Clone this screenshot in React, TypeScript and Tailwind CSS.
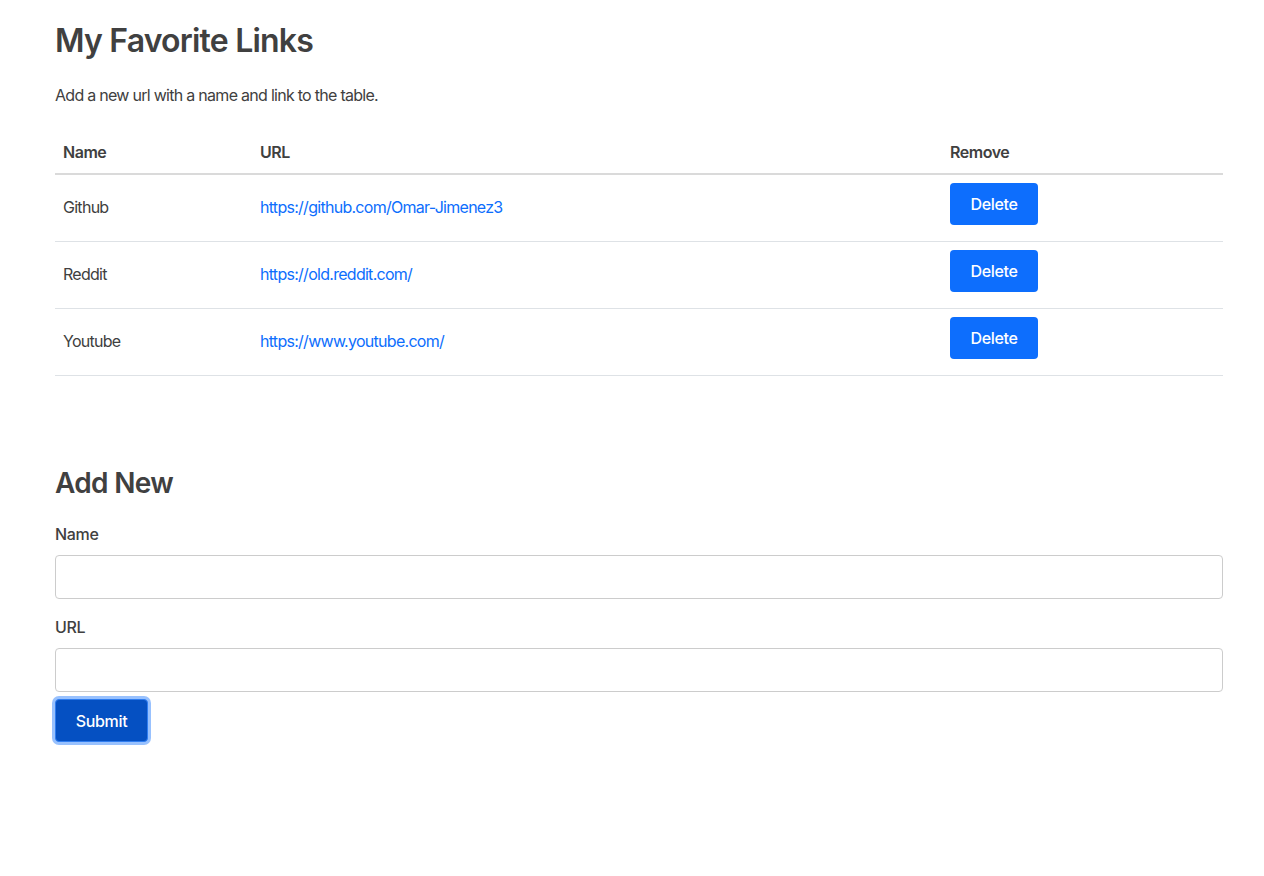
import { useState } from "react";

type Link = {
    name: string;
    url: string;
}

const initialLinks: Link[] = [
    { name: "Github", url: "https://github.com/Omar-Jimenez3" },
    { name: "Reddit", url: "https://old.reddit.com/" },
    { name: "Youtube", url: "https://www.youtube.com/" },
];

const App = () => {
    const [links, setLinks] = useState<Link[]>(initialLinks);
    const [name, setName] = useState("");
    const [url, setUrl] = useState("");

    const submit = (e: React.FormEvent) => {
        e.preventDefault();
        if (!name || !url) return;
        setLinks([...links, { name, url }]);
        setName("");
        setUrl("");
    };

    return (
        <div className="min-h-[876px] bg-white text-[#404040] font-['Inter','Liberation_Sans',sans-serif] tracking-[-0.045em]">
            <div className="w-[1168px] ml-[55px] pt-[22px]">
                <h2 className="text-[32px] leading-[1.2] font-semibold tracking-[-0.025em]">My Favorite Links</h2>
                <p className="mt-[23px] text-base leading-6">Add a new url with a name and link to the table.</p>

                <table className="mt-[26px] w-full text-left text-base leading-6 border-collapse">
                    <thead>
                        <tr className="border-b-2 border-[#dadada]">
                            <th className="w-[197px] px-2 pt-[7px] pb-[9px] font-semibold tracking-[-0.03em]">Name</th>
                            <th className="w-[690px] px-2 pt-[7px] pb-[9px] font-semibold tracking-[-0.03em]">URL</th>
                            <th className="px-2 pt-[7px] pb-[9px] font-semibold tracking-[-0.03em]">Remove</th>
                        </tr>
                    </thead>
                    <tbody>
                        {links.map((link, idx) => (
                            <tr key={idx} className="h-[67px] border-b border-[#dee2e6]">
                                <td className="px-2 pb-[2px] align-middle">{link.name}</td>
                                <td className="px-2 pb-[2px] align-middle">
                                    <a href={link.url} className="text-[#0d6efd]">{link.url}</a>
                                </td>
                                <td className="px-2 pt-[8px] pb-[15px] align-top">
                                    <button
                                        className="w-[88px] h-[42px] rounded-[4px] bg-[#0d6efd] text-white font-medium leading-6 tracking-[-0.02em]"
                                        onClick={() => setLinks(links.filter((_, i) => i !== idx))}
                                    >
                                        Delete
                                    </button>
                                </td>
                            </tr>
                        ))}
                    </tbody>
                </table>

                <h3 className="mt-[91px] text-[28px] leading-[1.2] font-semibold tracking-[-0.025em]">Add New</h3>
                <form onSubmit={submit} className="mt-[22px]">
                    <label className="block text-base leading-6 font-medium tracking-[-0.02em]">Name</label>
                    <input
                        value={name}
                        onChange={(e) => setName(e.target.value)}
                        className="mt-[9px] block w-full h-[44px] px-3 rounded-[4px] border border-[#cccccc] outline-none"
                    />
                    <label className="mt-4 block text-base leading-6 font-medium tracking-[-0.02em]">URL</label>
                    <input
                        value={url}
                        onChange={(e) => setUrl(e.target.value)}
                        className="mt-[9px] block w-full h-[44px] px-3 rounded-[4px] border border-[#cccccc] outline-none"
                    />
                    <button
                        type="submit"
                        className="mt-[7px] w-[93px] h-[43px] rounded-[4px] bg-[#0550c2] border border-[#2f7df0] text-white font-medium leading-6 tracking-[-0.02em] shadow-[0_0_0_3px_rgba(49,132,253,0.5)]"
                    >
                        Submit
                    </button>
                </form>
            </div>
        </div>
    );
};

export default App;
